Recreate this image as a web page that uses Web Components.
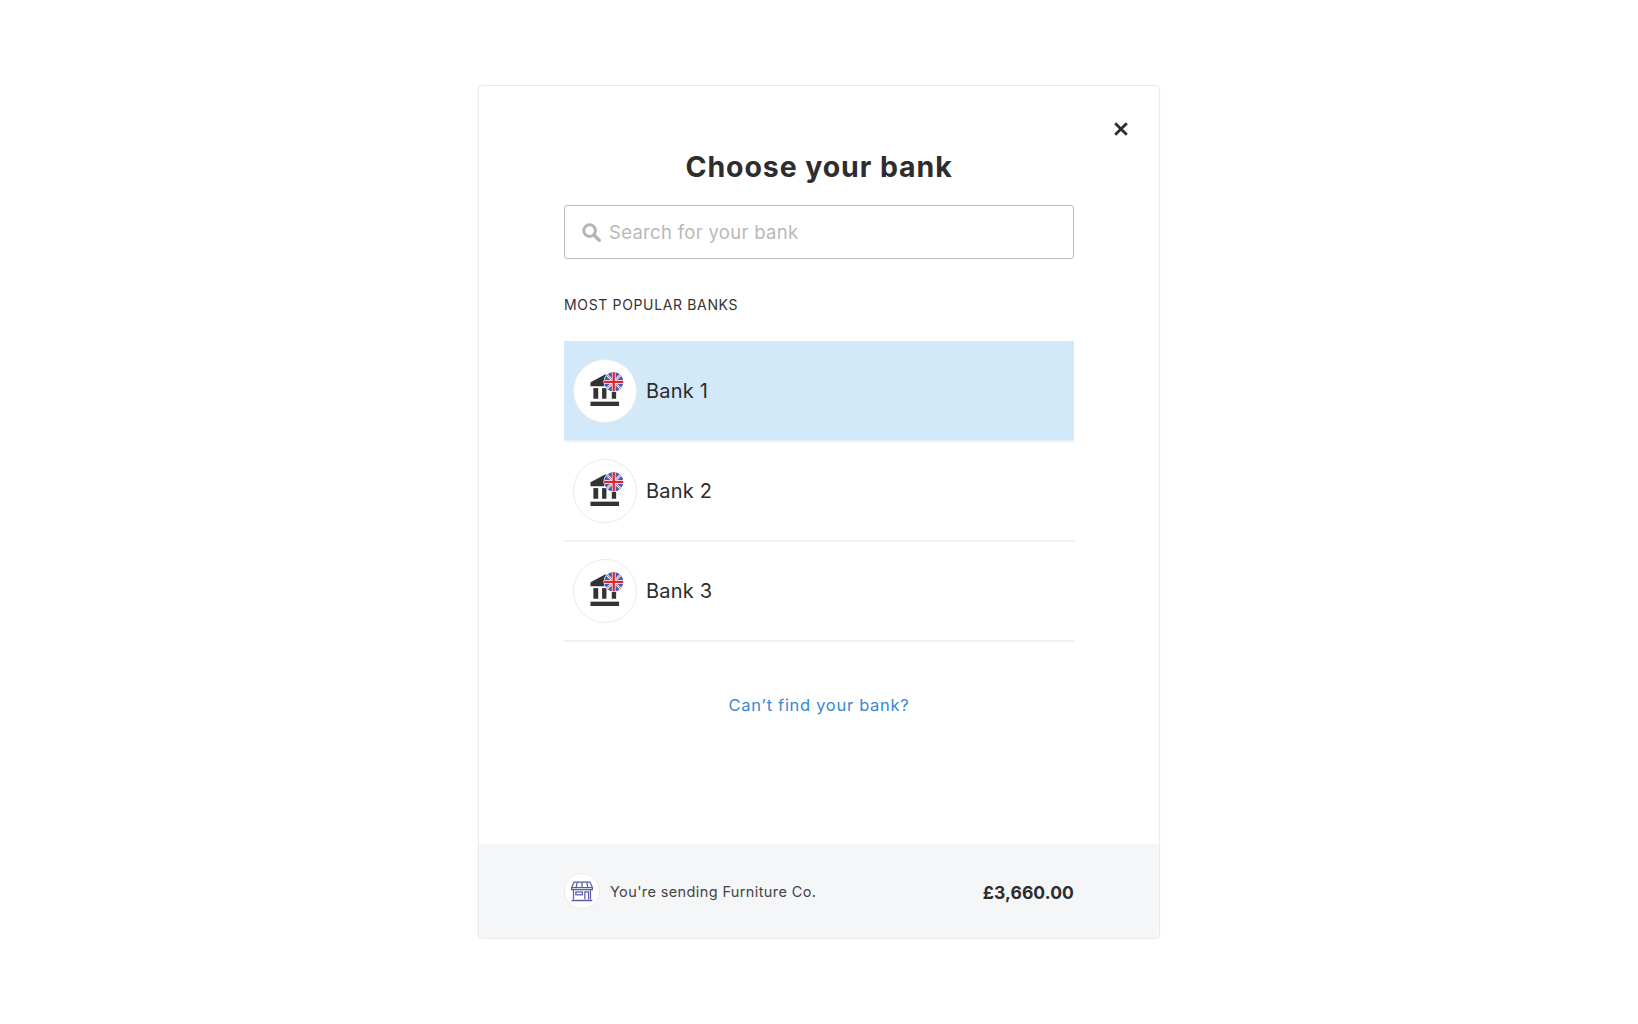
<!DOCTYPE html>
<html lang="en">
<head>
<meta charset="utf-8">
<title>Choose your bank</title>
<style>
  html, body { margin: 0; background: #fff; }
  body { font-family: Inter, "Liberation Sans", sans-serif; color: #2d2d2d; padding: 85px 0 0; }
</style>
</head>
<body>
<bank-modal>
  <span slot="title">Choose your bank</span>
  <bank-search slot="search" placeholder="Search for your bank" heading="MOST POPULAR BANKS"></bank-search>
  <bank-row selected>Bank 1</bank-row>
  <bank-row>Bank 2</bank-row>
  <bank-row>Bank 3</bank-row>
  <pay-footer slot="footer" amount="£3,660.00">You're sending Furniture Co.</pay-footer>
</bank-modal>

<script>
class BankModal extends HTMLElement {
    connectedCallback() {
        this.attachShadow({ mode: 'open' });
        this.shadowRoot.innerHTML = `
            <style>
                :host {
                    display: block;
                    box-sizing: border-box;
                    width: 682px;
                    height: 854px;
                    margin: 0 auto;
                    border: 1px solid #ebebeb;
                    border-radius: 4px;
                    box-shadow: 0 0 2px rgba(0, 0, 0, 0.05);
                    position: relative;
                    overflow: hidden;
                }
                .wrap { display: flex; flex-direction: column; height: 100%; }
                .body { flex: 1; padding: 63px 85px 0; }
                h1 {
                    margin: 0 0 20px;
                    text-align: center;
                    font-size: 28.5px;
                    line-height: 36px;
                    font-weight: 700;
                    letter-spacing: 0.9px;
                    color: #2d2d2d;
                }
                .close {
                    position: absolute;
                    top: 35px;
                    right: 30px;
                    width: 16px;
                    height: 16px;
                    display: block;
                }
                .link {
                    margin-top: 51px;
                    text-align: center;
                    font-size: 16.5px;
                    line-height: 24px;
                    letter-spacing: 0.7px;
                    color: #3a87d6;
                }
            </style>
            <div class="wrap">
                <svg class="close" viewBox="0 0 16 16"><path d="M2.2 2.2l11.6 11.6M13.8 2.2l-11.6 11.6" stroke="#2d2d2d" stroke-width="2.8" fill="none"/></svg>
                <div class="body">
                    <h1><slot name="title"></slot></h1>
                    <slot name="search"></slot>
                    <slot></slot>
                    <div class="link">Can’t find your bank?</div>
                </div>
                <slot name="footer"></slot>
            </div>
        `;
    }
}

class BankSearch extends HTMLElement {
    connectedCallback() {
        this.attachShadow({ mode: 'open' });
        this.shadowRoot.innerHTML = `
            <style>
                :host { display: block; }
                .box {
                    box-sizing: border-box;
                    height: 54px;
                    border: 1px solid #bdbdbd;
                    border-radius: 3px;
                    display: flex;
                    align-items: center;
                    gap: 8px;
                    padding: 0 17px;
                }
                svg { width: 19px; height: 19px; flex: none; }
                span { font-size: 18.5px; letter-spacing: 0.3px; color: #b8b8b8; padding-bottom: 1px; }
                .title {
                    margin: 37px 0 28px;
                    font-size: 14px;
                    line-height: 18px;
                    letter-spacing: 0.65px;
                    color: #333;
                }
            </style>
            <div class="box">
                <svg viewBox="0 0 19 19"><circle cx="7.6" cy="7.6" r="5.8" fill="none" stroke="#b5b5b5" stroke-width="3"/><path d="M12 12l5.2 5.2" stroke="#b5b5b5" stroke-width="3.4" stroke-linecap="round"/></svg>
                <span>${this.getAttribute('placeholder')}</span>
            </div>
            <div class="title">${this.getAttribute('heading')}</div>
        `;
    }
}

class BankRow extends HTMLElement {
    connectedCallback() {
        this.attachShadow({ mode: 'open' });
        this.shadowRoot.innerHTML = `
            <style>
                :host {
                    display: flex;
                    box-sizing: border-box;
                    height: 100px;
                    align-items: center;
                    gap: 9px;
                    padding-left: 9px;
                    border-bottom: 2px solid #f0f0f0;
                    font-size: 20px;
                    letter-spacing: 0.2px;
                    color: #2d2d2d;
                }
                :host([selected]) { background: #d2e9fa; border-bottom-color: #e6f2fb; box-shadow: 0 -1px 0 #d2e9fa; }
                .logo {
                    width: 64px;
                    height: 64px;
                    box-sizing: border-box;
                    border-radius: 50%;
                    background: #fff;
                    border: 1px solid #ebebeb;
                    flex: none;
                    display: block;
                }
            </style>
            <svg class="logo" viewBox="0 0 64 64">
                <defs>
                    <clipPath id="flag"><circle cx="41" cy="22.5" r="10"/></clipPath>
                </defs>
                <path d="M17 23 L32 15 H38 V27 H17 Z" fill="#333"/>
                <rect x="20" y="29" width="5" height="11" fill="#333"/>
                <rect x="29" y="29" width="4.5" height="11" fill="#333"/>
                <rect x="39" y="33" width="4.5" height="7" fill="#333"/>
                <rect x="17" y="43" width="29.5" height="4.5" fill="#333"/>
                <circle cx="41" cy="22.5" r="10.6" fill="#fff"/>
                <g clip-path="url(#flag)">
                    <rect x="31" y="12.5" width="20" height="20" fill="#3f62b8"/>
                    <path d="M31 12.5 L51 32.5 M51 12.5 L31 32.5" stroke="#f3f3f3" stroke-width="2.4"/>
                    <path d="M31 12.5 L51 32.5 M51 12.5 L31 32.5" stroke="#d8505c" stroke-width="0.9"/>
                    <path d="M41 12.5 V32.5 M31 22.5 H51" stroke="#fff" stroke-width="3.8"/>
                    <path d="M41 12.5 V32.5 M31 22.5 H51" stroke="#d62839" stroke-width="2.4"/>
                </g>
            </svg>
            <slot></slot>
        `;
    }
}

class PayFooter extends HTMLElement {
    connectedCallback() {
        this.attachShadow({ mode: 'open' });
        this.shadowRoot.innerHTML = `
            <style>
                :host {
                    display: flex;
                    box-sizing: border-box;
                    height: 94px;
                    align-items: center;
                    padding: 0 85px;
                    background: #f5f6f8;
                    font-size: 14.5px;
                    letter-spacing: 0.38px;
                    color: #444;
                }
                .logo {
                    width: 36px;
                    height: 36px;
                    border-radius: 50%;
                    background: #fff;
                    border: 1px solid #ededed;
                    box-sizing: border-box;
                    margin-right: 10px;
                    flex: none;
                    display: block;
                }
                .text { flex: 1; }
                .amount { font-size: 17.5px; font-weight: 700; letter-spacing: 0.1px; color: #2d2d2d; padding-top: 2px; }
            </style>
            <svg class="logo" viewBox="0 0 36 36" fill="none" stroke="#5b5ba8" stroke-width="1.3">
                <path d="M9.5 8.5h17l2.5 6H7z"/>
                <path d="M13 8.5l-1.3 6M18 8.5v6M23 8.5l1.3 6"/>
                <path d="M7 14.5v2h22v-2"/>
                <path d="M9 16.5v10.5M27 16.5v10.5"/>
                <rect x="11.5" y="19" width="7" height="3"/>
                <path d="M21 27v-8h4v8"/>
                <path d="M7 28h22" stroke-width="1.6"/>
            </svg>
            <span class="text"><slot></slot></span>
            <span class="amount">${this.getAttribute('amount')}</span>
        `;
    }
}

customElements.define('bank-modal', BankModal);
customElements.define('bank-search', BankSearch);
customElements.define('bank-row', BankRow);
customElements.define('pay-footer', PayFooter);
</script>
</body>
</html>
